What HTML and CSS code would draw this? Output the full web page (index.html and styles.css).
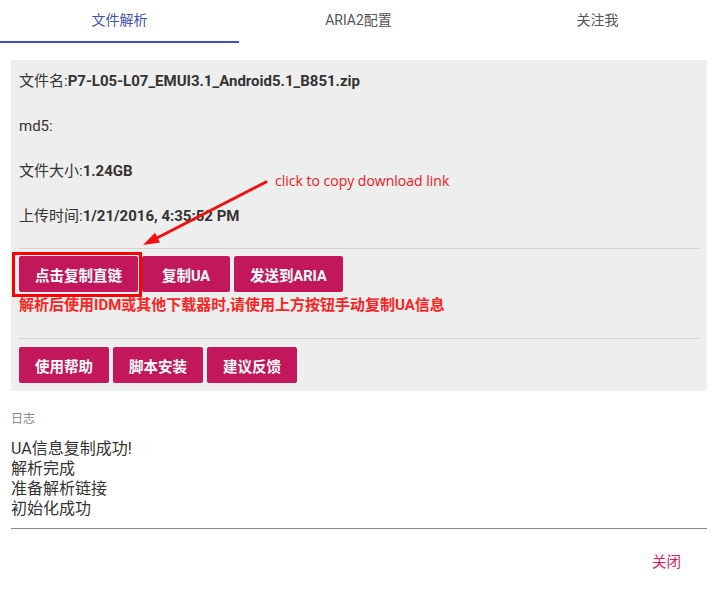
FILE: index.html
```html
<!DOCTYPE html>
<html lang="zh-CN">
<head>
    <meta charset="UTF-8">
    <title>文件解析</title>
    <link rel="stylesheet" href="styles.css">
</head>
<body>
    <div id="dialog">
        <div class="tabs">
            <div class="tab active">文件解析</div>
            <div class="tab">ARIA2配置</div>
            <div class="tab">关注我</div>
        </div>

        <div class="panel">
            <div class="info-row">文件名:<b>P7-L05-L07_EMUI3.1_Android5.1_B851.zip</b></div>
            <div class="info-row">md5:</div>
            <div class="info-row">文件大小:<b>1.24GB</b></div>
            <div class="info-row last">上传时间:<b>1/21/2016, 4:35:52 PM</b></div>
            <hr class="divider">
            <div class="btn-row">
                <button class="btn">点击复制直链</button>
                <button class="btn">复制UA</button>
                <button class="btn">发送到ARIA</button>
            </div>
            <p class="warn">解析后使用IDM或其他下载器时,请使用上方按钮手动复制UA信息</p>
            <hr class="divider second">
            <div class="btn-row">
                <button class="btn">使用帮助</button>
                <button class="btn">脚本安装</button>
                <button class="btn">建议反馈</button>
            </div>
        </div>

        <div class="log">
            <div class="log-label">日志</div>
            <div class="log-box">
                <div>UA信息复制成功!</div>
                <div>解析完成</div>
                <div>准备解析链接</div>
                <div>初始化成功</div>
            </div>
        </div>

        <div class="actions">
            <span class="close-btn">关闭</span>
        </div>

        <!-- 截图上的标注 -->
        <div class="mark-box"></div>
        <svg class="mark-arrow" width="717" height="599" viewBox="0 0 717 599">
            <line x1="266" y1="182" x2="154" y2="239.5" stroke="#f01010" stroke-width="3" stroke-linecap="round"/>
            <polygon points="143,245 160,242.5 155,232.8" fill="#f01010"/>
        </svg>
        <div class="mark-note">click to copy download link</div>
    </div>
</body>
</html>
```

FILE: styles.css
```css
html, body {
    margin: 0;
    padding: 0;
    background: #fff;
}
body {
    font-family: Roboto, "Noto Sans CJK SC", sans-serif;
    color: #333;
}
#dialog {
    position: relative;
    width: 717px;
    height: 599px;
}
.tabs {
    display: flex;
    height: 43px;
}
.tab {
    flex: 1;
    text-align: center;
    line-height: 41px;
    font-size: 14px;
    color: #555;
    border-bottom: 2px solid transparent;
}
.tab.active {
    color: #3f51b5;
    border-bottom-color: #3f51b5;
}
.panel {
    margin: 17px 10px 0 11px;
    padding: 11px 8px 8px;
    background-color: #eeeeee;
}
.info-row {
    font-size: 15px;
    line-height: 20px;
    margin-bottom: 25px;
}
.info-row.last {
    margin-bottom: 22px;
}
.info-row b {
    font-weight: bold;
}
.divider {
    border: none;
    border-top: 1px solid #d2d2d2;
    margin: 0 0 7px;
}
.divider.second {
    margin-bottom: 8px;
}
.btn-row {
    display: flex;
    gap: 4px;
}
.btn {
    height: 36px;
    min-width: 88px;
    padding: 0 16px;
    border: none;
    border-radius: 2px;
    background-color: #c2185b;
    color: #fff;
    font-family: Roboto, "Noto Sans CJK SC", sans-serif;
    font-size: 14.5px;
    font-weight: bold;
}
.warn {
    margin: 3px 0 23px;
    font-size: 15px;
    line-height: 20px;
    font-weight: bold;
    color: #f22;
}
.log {
    margin: 20px 10px 0 11px;
}
.log-label {
    font-size: 12px;
    line-height: 16px;
    color: #888;
}
.log-box {
    margin-top: 12px;
    padding-bottom: 9px;
    border-bottom: 1px solid #8a8a8a;
    font-size: 16px;
    line-height: 20px;
    color: #333;
}
.actions {
    display: flex;
    justify-content: flex-end;
    padding: 24px 36px 0 0;
}
.close-btn {
    font-size: 14.5px;
    line-height: 20px;
    color: #d81b60;
}
.mark-box {
    position: absolute;
    left: 12px;
    top: 252px;
    width: 130px;
    height: 45px;
    box-sizing: border-box;
    border: 3px solid #f00;
}
.mark-arrow {
    position: absolute;
    left: 0;
    top: 0;
}
.mark-note {
    position: absolute;
    left: 275px;
    top: 171px;
    font-family: "Open Sans", sans-serif;
    font-size: 14px;
    line-height: 20px;
    color: #f01818;
}
```
